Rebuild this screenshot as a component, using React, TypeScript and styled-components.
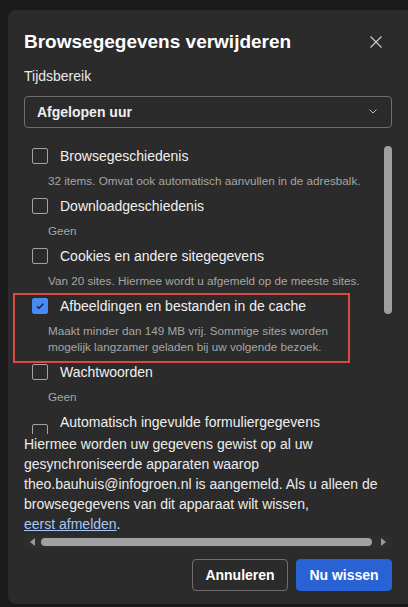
import React from 'react';
import styled, { createGlobalStyle } from 'styled-components';

const GlobalStyle = createGlobalStyle`
  html, body {
    margin: 0;
    padding: 0;
    background: #1a1a1a;
    overflow: hidden;
  }
  body {
    font-family: "Segoe UI", "Liberation Sans", Arial, sans-serif;
    color: #e8e8e8;
  }
  * {
    box-sizing: border-box;
  }
`;

const Page = styled.div`
  width: 408px;
  height: 607px;
  padding: 10px 0 0 8px;
`;

const Dialog = styled.div`
  width: 400px;
  height: 594px;
  background: #2b2b2b;
  border-radius: 8px 0 0 8px;
  padding: 18px 16px 13px;
  display: flex;
  flex-direction: column;
`;

const Header = styled.div`
  display: flex;
  align-items: center;
  justify-content: space-between;
  height: 28px;
`;

const Title = styled.h1`
  margin: 0;
  font-size: 19px;
  font-weight: 700;
  color: #ffffff;
  line-height: 28px;
`;

const CloseButton = styled.button`
  width: 24px;
  height: 24px;
  margin-right: 4px;
  padding: 0;
  border: none;
  background: transparent;
  display: flex;
  align-items: center;
  justify-content: center;
  color: #cfcfcf;
`;

const FieldLabel = styled.div`
  margin-top: 10px;
  font-size: 14px;
  line-height: 20px;
  color: #e8e8e8;
`;

const Select = styled.div`
  margin-top: 10px;
  height: 32px;
  border: 1px solid #6e6e6e;
  border-radius: 4px;
  padding: 0 14px 0 12px;
  display: flex;
  align-items: center;
  justify-content: space-between;
  font-size: 14px;
  font-weight: 700;
  color: #f0f0f0;
`;

const ListArea = styled.div`
  margin: 12px -16px 0;
  height: 296px;
  display: flex;
  overflow: hidden;
`;

const ListContent = styled.div`
  flex: 1;
  padding: 0 12px 0 24px;
`;

const Item = styled.div`
  position: relative;
`;

const ItemRow = styled.label`
  display: flex;
  align-items: center;
  padding: 6px 0;
  gap: 12px;
`;

const Box = styled.span<{ $checked?: boolean }>`
  flex: none;
  width: 16px;
  height: 16px;
  border-radius: 2px;
  border: 1px solid ${(p) => (p.$checked ? '#4a8af4' : '#a3a3a3')};
  background: ${(p) => (p.$checked ? '#4a8af4' : 'transparent')};
  display: flex;
  align-items: center;
  justify-content: center;
`;

const ItemLabel = styled.span`
  font-size: 14px;
  line-height: 20px;
  color: #f0f0f0;
`;

const ItemDesc = styled.div`
  padding: 1px 0 1px 16px;
  font-size: 11.7px;
  line-height: 16px;
  color: #a6a6a6;
`;

const Highlight = styled.div`
  position: absolute;
  left: -19px;
  top: 3px;
  width: 337px;
  height: 70px;
  border: 2px solid #d94a42;
  pointer-events: none;
`;

const VScroll = styled.div`
  flex: none;
  width: 8px;
  margin-right: 16px;
  padding-top: 6px;
`;

const VThumb = styled.div`
  height: 168px;
  border-radius: 4px;
  background: #9f9f9f;
`;

const Notice = styled.p`
  margin: 0;
  font-size: 14px;
  line-height: 20px;
  color: #ececec;
`;

const Link = styled.a`
  color: #a9c7f5;
  text-decoration: underline;
`;

const NoWrap = styled.span`
  white-space: nowrap;
`;

const HScroll = styled.div`
  margin-top: 2px;
  height: 12px;
  display: flex;
  align-items: center;
  gap: 6px;
  padding: 0 6px;
  background: #2e2e2e;
`;

const Arrow = styled.span<{ $dir: 'left' | 'right' }>`
  flex: none;
  width: 0;
  height: 0;
  border-top: 4px solid transparent;
  border-bottom: 4px solid transparent;
  ${(p) =>
    p.$dir === 'left'
      ? 'border-right: 5px solid #9a9a9a;'
      : 'border-left: 5px solid #9a9a9a;'}
`;

const HThumb = styled.div`
  flex: 1;
  height: 8px;
  margin-right: 3px;
  border-radius: 4px;
  background: #a0a0a0;
`;

const Actions = styled.div`
  margin-top: 11px;
  display: flex;
  justify-content: flex-end;
  gap: 8px;
`;

const Button = styled.button<{ $primary?: boolean }>`
  width: 96px;
  height: 32px;
  border-radius: 4px;
  font-family: inherit;
  font-size: 14px;
  font-weight: 700;
  color: #ffffff;
  border: 1px solid ${(p) => (p.$primary ? '#2862d4' : '#6f6f6f')};
  background: ${(p) => (p.$primary ? '#2862d4' : 'transparent')};
`;

type Entry = {
  label: string;
  desc?: string;
  checked?: boolean;
  highlighted?: boolean;
};

const entries: Entry[] = [
  { label: 'Browsegeschiedenis', desc: '32 items. Omvat ook automatisch aanvullen in de adresbalk.' },
  { label: 'Downloadgeschiedenis', desc: 'Geen' },
  { label: 'Cookies en andere sitegegevens', desc: 'Van 20 sites. Hiermee wordt u afgemeld op de meeste sites.' },
  {
    label: 'Afbeeldingen en bestanden in de cache',
    desc: 'Maakt minder dan 149 MB vrij. Sommige sites worden mogelijk langzamer geladen bij uw volgende bezoek.',
    checked: true,
    highlighted: true,
  },
  { label: 'Wachtwoorden', desc: 'Geen' },
  { label: 'Automatisch ingevulde formuliergegevens (inclusief formulieren en kaarten)' },
];

function Checkbox({ checked }: { checked?: boolean }) {
  return (
    <Box $checked={checked}>
      {checked && (
        <svg width="10" height="10" viewBox="0 0 10 10">
          <path d="M1.8 5.2 L4 7.3 L8.3 2.8" fill="none" stroke="#1c2533" strokeWidth="1.4" />
        </svg>
      )}
    </Box>
  );
}

export default function App() {
  return (
    <Page>
      <GlobalStyle />
      <Dialog>
        <Header>
          <Title>Browsegegevens verwijderen</Title>
          <CloseButton aria-label="Sluiten">
            <svg width="12" height="12" viewBox="0 0 12 12">
              <path d="M0.5 0.5 L11.5 11.5 M11.5 0.5 L0.5 11.5" stroke="currentColor" strokeWidth="1.1" />
            </svg>
          </CloseButton>
        </Header>
        <FieldLabel>Tijdsbereik</FieldLabel>
        <Select>
          <span>Afgelopen uur</span>
          <svg width="8" height="5" viewBox="0 0 8 5">
            <path d="M0.5 0.5 L4 4 L7.5 0.5" fill="none" stroke="#bdbdbd" strokeWidth="1" />
          </svg>
        </Select>
        <ListArea>
          <ListContent>
            {entries.map((e) => (
              <Item key={e.label}>
                <ItemRow>
                  <Checkbox checked={e.checked} />
                  <ItemLabel>{e.label}</ItemLabel>
                </ItemRow>
                {e.desc && <ItemDesc>{e.desc}</ItemDesc>}
                {e.highlighted && <Highlight />}
              </Item>
            ))}
          </ListContent>
          <VScroll>
            <VThumb />
          </VScroll>
        </ListArea>
        <Notice>
          Hiermee worden uw gegevens gewist op al uw gesynchroniseerde apparaten waarop
          theo.bauhuis@infogroen.nl is aangemeld. Als u alleen de browsegegevens van dit apparaat
          wilt wissen, <NoWrap><Link href="#">eerst afmelden</Link>.</NoWrap>
        </Notice>
        <HScroll>
          <Arrow $dir="left" />
          <HThumb />
          <Arrow $dir="right" />
        </HScroll>
        <Actions>
          <Button>Annuleren</Button>
          <Button $primary>Nu wissen</Button>
        </Actions>
      </Dialog>
    </Page>
  );
}
